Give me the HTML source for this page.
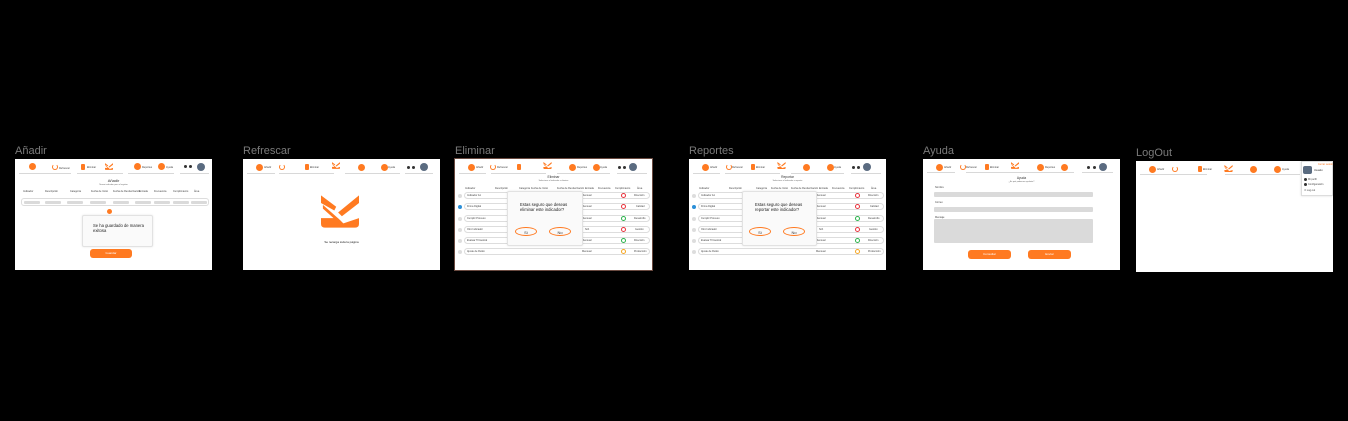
<!DOCTYPE html>
<html><head><meta charset="utf-8">
<style>
*{margin:0;padding:0;box-sizing:border-box}
body{width:1348px;height:421px;background:#000;position:relative;overflow:hidden;font-family:"Liberation Sans",sans-serif}
.lbl{position:absolute;color:#7b7b7b;font-size:11px}
.f{position:absolute;width:197px;height:111px;background:#fff;overflow:hidden}
.f *{position:absolute}
.c{width:7px;height:7px;border-radius:50%;background:#ff7a21}
.d{width:3px;height:3px;border-radius:50%;background:#333}
.av{width:8px;height:8px;border-radius:50%;background:#5a6b80}
.ul{height:1px;background:#d8d8d8}
.t{font-size:2.5px;color:#444;white-space:nowrap}
.doc{width:4px;height:6px;background:#ff7a21;border-radius:1px}
.rf{width:6px;height:6px;border:1.2px solid #ff7a21;border-radius:50%;border-top-color:transparent}
.bar{background:#dadada;height:3px;border-radius:1px}
.btn{background:#ff7a21;border-radius:3px;color:#fff;font-size:3px;text-align:center}
.row{left:9px;width:186px;height:7px;border:0.5px solid #ddd;border-radius:4px}
.rd{width:4px;height:4px;border-radius:50%;background:#ddd;left:3px}
.st{width:5px;height:5px;border-radius:50%;border:1px solid #e8323c;left:166px}
.md{background:#fafafa;border:0.5px solid #e2e2e2;border-radius:2px;box-shadow:0 0 2px rgba(0,0,0,.1)}
.el{border:0.6px solid #ff7a21;border-radius:50%;font-size:4px;text-align:center;color:#333}
</style></head><body>

<svg width="0" height="0" style="position:absolute"><defs>
<symbol id="lg" viewBox="0 0 40 34"><path d="M0 0 L16 12 L14 16 L0 8Z M40 0 L40 8 L22 22 L18 18Z M0 24 L18 24 L22 30 L40 24 L40 30 Q40 34 36 34 L4 34 Q0 34 0 30Z M2 10 L20 26 L24 30 L20 30 L2 14Z" fill="#ff7a21"/></symbol>
</defs></svg>

<div class="lbl" style="left:15px;top:145px">Añadir</div>
<div class="lbl" style="left:243px;top:145px">Refrescar</div>
<div class="lbl" style="left:455px;top:145px">Eliminar</div>
<div class="lbl" style="left:689px;top:145px">Reportes</div>
<div class="lbl" style="left:923px;top:145px">Ayuda</div>
<div class="lbl" style="left:1136px;top:147px">LogOut</div>

<!-- Añadir -->
<div class="f" style="left:15px;top:159px">
<div class="c" style="left:14px;top:4px"></div>
<div class="rf" style="left:37px;top:5px"></div><div class="t" style="left:44px;top:8px">Refrescar</div>
<div class="doc" style="left:66px;top:5px"></div><div class="t" style="left:72px;top:7px">Eliminar</div>
<svg style="left:90px;top:4px" width="8" height="7"><use href="#lg"/></svg>
<div class="c" style="left:119px;top:4px"></div><div class="t" style="left:127px;top:7px">Reportes</div>
<div class="c" style="left:143px;top:4px"></div><div class="t" style="left:151px;top:7px">Ayuda</div>
<div class="d" style="left:169px;top:6px"></div><div class="d" style="left:174px;top:6px"></div>
<div class="av" style="left:182px;top:4px"></div>
<div class="ul" style="left:4px;top:14px;width:52px"></div><div class="ul" style="left:62px;top:14px;width:46px"></div>
<div class="ul" style="left:113px;top:14px;width:46px"></div><div class="ul" style="left:165px;top:14px;width:29px"></div>
<div style="left:0;width:197px;top:19px;text-align:center;font-size:4px;color:#333">Añadir</div>
<div style="left:0;width:197px;top:25px;text-align:center;font-size:2px;color:#666">Nuevo indicador para el registro</div>
<div class="t" style="left:8px;top:31px">Indicador</div><div class="t" style="left:30px;top:31px">Descripción</div><div class="t" style="left:55px;top:31px">Categoría</div><div class="t" style="left:76px;top:31px">Fecha de Inicio</div><div class="t" style="left:98px;top:31px">Fecha de Renderización</div><div class="t" style="left:124px;top:31px">Entrada</div><div class="t" style="left:139px;top:31px">Frecuencia</div><div class="t" style="left:158px;top:31px">Cumplimiento</div><div class="t" style="left:179px;top:31px">Área</div>
<div style="left:6px;top:39px;width:188px;height:8px;border:0.5px solid #ddd;border-radius:3px"></div>
<div class="bar" style="left:9px;top:42px;width:16px"></div><div class="bar" style="left:30px;top:42px;width:16px"></div><div class="bar" style="left:52px;top:42px;width:16px"></div><div class="bar" style="left:75px;top:42px;width:16px"></div><div class="bar" style="left:98px;top:42px;width:16px"></div><div class="bar" style="left:120px;top:42px;width:16px"></div><div class="bar" style="left:139px;top:42px;width:16px"></div><div class="bar" style="left:158px;top:42px;width:16px"></div><div class="bar" style="left:176px;top:42px;width:16px"></div>
<div class="c" style="left:92px;top:50px;width:5px;height:5px"></div>
<div class="md" style="left:67px;top:56px;width:71px;height:32px"></div>
<div style="left:78px;top:64px;font-size:4.2px;color:#222;line-height:5px;width:55px">Se ha guardado de manera exitosa</div>
<div class="btn" style="left:75px;top:90px;width:42px;height:9px;line-height:9px">Guardar</div>
</div>

<!-- Refrescar -->
<div class="f" style="left:243px;top:159px">
<div class="c" style="left:13px;top:5px"></div><div class="t" style="left:21px;top:7px">Añadir</div>
<div class="rf" style="left:36px;top:5px"></div>
<div class="doc" style="left:62px;top:5px"></div><div class="t" style="left:67px;top:7px">Eliminar</div>
<svg style="left:89px;top:3px" width="8" height="7"><use href="#lg"/></svg>
<div class="c" style="left:115px;top:5px"></div>
<div class="c" style="left:138px;top:5px"></div><div class="t" style="left:145px;top:7px">Ayuda</div>
<div class="d" style="left:164px;top:7px"></div><div class="d" style="left:169px;top:7px"></div>
<div class="av" style="left:177px;top:4px"></div>
<div class="ul" style="left:4px;top:14px;width:28px"></div><div class="ul" style="left:36px;top:14px;width:55px"></div>
<div class="ul" style="left:102px;top:14px;width:55px"></div><div class="ul" style="left:162px;top:14px;width:28px"></div>
<svg style="left:78px;top:36px" width="38" height="33"><use href="#lg"/></svg>
<div style="left:0;width:197px;top:81px;text-align:center;font-size:3px;color:#222">Se recarga toda la página</div>
</div>

<!-- Eliminar & Reportes -->
<div class="f" style="left:455px;top:159px;outline:1px solid #6a4a40">
<div class="c" style="left:13px;top:5px"></div><div class="t" style="left:21px;top:7px">Añadir</div>
<div class="rf" style="left:35px;top:5px"></div><div class="t" style="left:42px;top:7px">Refrescar</div>
<div class="doc" style="left:62px;top:5px"></div>
<svg style="left:88px;top:3px" width="9" height="7"><use href="#lg"/></svg>
<div class="c" style="left:114px;top:5px"></div><div class="t" style="left:122px;top:7px">Reportes</div>
<div class="c" style="left:138px;top:5px"></div><div class="t" style="left:145px;top:7px">Ayuda</div>
<div class="d" style="left:163px;top:7px"></div><div class="d" style="left:168px;top:7px"></div>
<div class="av" style="left:174px;top:4px"></div>
<div class="ul" style="left:4px;top:14px;width:27px"></div><div class="ul" style="left:36px;top:14px;width:55px"></div><div class="ul" style="left:102px;top:14px;width:53px"></div><div class="ul" style="left:162px;top:14px;width:30px"></div>
<div style="left:0;width:197px;top:16px;text-align:center;font-size:3.3px;color:#333">Eliminar</div>
<div style="left:0;width:197px;top:21px;text-align:center;font-size:2px;color:#666">Seleccione el indicador a eliminar</div>
<div class="t" style="left:10px;top:28px">Indicador</div><div class="t" style="left:40px;top:28px">Descripción</div><div class="t" style="left:64px;top:28px">Categoría</div><div class="t" style="left:76px;top:28px">Fecha de Inicio</div><div class="t" style="left:102px;top:28px">Fecha de Renderización</div><div class="t" style="left:130px;top:28px">Entrada</div><div class="t" style="left:143px;top:28px">Frecuencia</div><div class="t" style="left:160px;top:28px">Cumplimiento</div><div class="t" style="left:182px;top:28px">Área</div>
<div class="row" style="top:33px"></div><div class="row" style="top:44px"></div><div class="row" style="top:56px"></div><div class="row" style="top:67px"></div><div class="row" style="top:78px"></div><div class="row" style="top:89px"></div>
<div class="rd" style="top:35px"></div><div class="rd" style="top:46px;background:#2b8fd8"></div><div class="rd" style="top:58px"></div><div class="rd" style="top:69px"></div><div class="rd" style="top:80px"></div><div class="rd" style="top:91px"></div>
<div class="t" style="left:12px;top:35px">Indicador A1</div><div class="t" style="left:12px;top:46px">Firma Digital</div><div class="t" style="left:12px;top:58px">Cumplir Proceso</div><div class="t" style="left:12px;top:69px">Otro Indicador</div><div class="t" style="left:12px;top:80px">Evaluar Trimestral</div><div class="t" style="left:12px;top:91px">Ajuste de Ruido</div>
<div class="t" style="left:127px;top:35px">Mensual</div><div class="t" style="left:127px;top:46px">Mensual</div><div class="t" style="left:127px;top:58px">Mensual</div><div class="t" style="left:130px;top:69px">N/A</div><div class="t" style="left:127px;top:80px">Mensual</div><div class="t" style="left:127px;top:91px">Mensual</div>
<div class="st" style="top:34px"></div><div class="st" style="top:45px"></div><div class="st" style="top:57px;border-color:#2bb24c"></div><div class="st" style="top:68px"></div><div class="st" style="top:79px;border-color:#2bb24c"></div><div class="st" style="top:90px;border-color:#f5a623"></div>
<div class="t" style="left:179px;top:35px">Dirección</div><div class="t" style="left:181px;top:46px">Calidad</div><div class="t" style="left:179px;top:58px">Desarrollo</div><div class="t" style="left:180px;top:69px">Gestión</div><div class="t" style="left:179px;top:80px">Dirección</div><div class="t" style="left:179px;top:91px">Producción</div>
<div class="md" style="left:52px;top:32px;width:76px;height:55px"></div>
<div style="left:65px;top:43px;font-size:4.2px;color:#222;line-height:5px;width:55px">Estas seguro que deseas eliminar este indicador?</div>
<div class="el" style="left:60px;top:68px;width:22px;height:9px;line-height:9px">Sí</div>
<div class="el" style="left:94px;top:68px;width:22px;height:9px;line-height:9px">No</div>
</div>

<div class="f" style="left:689px;top:159px">
<div class="c" style="left:13px;top:5px"></div><div class="t" style="left:21px;top:7px">Añadir</div>
<div class="rf" style="left:37px;top:5px"></div><div class="t" style="left:43px;top:7px">Refrescar</div>
<div class="doc" style="left:62px;top:5px"></div><div class="t" style="left:67px;top:7px">Eliminar</div>
<svg style="left:88px;top:3px" width="9" height="7"><use href="#lg"/></svg>
<div class="c" style="left:114px;top:5px"></div>
<div class="c" style="left:138px;top:5px"></div><div class="t" style="left:145px;top:7px">Ayuda</div>
<div class="d" style="left:163px;top:7px"></div><div class="d" style="left:168px;top:7px"></div>
<div class="av" style="left:174px;top:4px"></div>
<div class="ul" style="left:4px;top:14px;width:27px"></div><div class="ul" style="left:36px;top:14px;width:55px"></div><div class="ul" style="left:102px;top:14px;width:53px"></div><div class="ul" style="left:162px;top:14px;width:30px"></div>
<div style="left:0;width:197px;top:16px;text-align:center;font-size:3.3px;color:#333">Reportar</div>
<div style="left:0;width:197px;top:21px;text-align:center;font-size:2px;color:#666">Seleccione el indicador a reportar</div>
<div class="t" style="left:10px;top:28px">Indicador</div><div class="t" style="left:40px;top:28px">Descripción</div><div class="t" style="left:67px;top:28px">Categoría</div><div class="t" style="left:82px;top:28px">Fecha de Inicio</div><div class="t" style="left:102px;top:28px">Fecha de Renderización</div><div class="t" style="left:130px;top:28px">Entrada</div><div class="t" style="left:143px;top:28px">Frecuencia</div><div class="t" style="left:160px;top:28px">Cumplimiento</div><div class="t" style="left:182px;top:28px">Área</div>
<div class="row" style="top:33px"></div><div class="row" style="top:44px"></div><div class="row" style="top:56px"></div><div class="row" style="top:67px"></div><div class="row" style="top:78px"></div><div class="row" style="top:89px"></div>
<div class="rd" style="top:35px"></div><div class="rd" style="top:46px;background:#2b8fd8"></div><div class="rd" style="top:58px"></div><div class="rd" style="top:69px"></div><div class="rd" style="top:80px"></div><div class="rd" style="top:91px"></div>
<div class="t" style="left:12px;top:35px">Indicador A1</div><div class="t" style="left:12px;top:46px">Firma Digital</div><div class="t" style="left:12px;top:58px">Cumplir Proceso</div><div class="t" style="left:12px;top:69px">Otro Indicador</div><div class="t" style="left:12px;top:80px">Evaluar Trimestral</div><div class="t" style="left:12px;top:91px">Ajuste de Ruido</div>
<div class="t" style="left:127px;top:35px">Mensual</div><div class="t" style="left:127px;top:46px">Mensual</div><div class="t" style="left:127px;top:58px">Mensual</div><div class="t" style="left:130px;top:69px">N/A</div><div class="t" style="left:127px;top:80px">Mensual</div><div class="t" style="left:127px;top:91px">Mensual</div>
<div class="st" style="top:34px"></div><div class="st" style="top:45px"></div><div class="st" style="top:57px;border-color:#2bb24c"></div><div class="st" style="top:68px"></div><div class="st" style="top:79px;border-color:#2bb24c"></div><div class="st" style="top:90px;border-color:#f5a623"></div>
<div class="t" style="left:179px;top:35px">Dirección</div><div class="t" style="left:181px;top:46px">Calidad</div><div class="t" style="left:179px;top:58px">Desarrollo</div><div class="t" style="left:180px;top:69px">Gestión</div><div class="t" style="left:179px;top:80px">Dirección</div><div class="t" style="left:179px;top:91px">Producción</div>
<div class="md" style="left:53px;top:32px;width:75px;height:55px"></div>
<div style="left:66px;top:43px;font-size:4.2px;color:#222;line-height:5px;width:55px">Estas seguro que deseas reportar este indicador?</div>
<div class="el" style="left:60px;top:68px;width:22px;height:9px;line-height:9px">Sí</div>
<div class="el" style="left:94px;top:68px;width:22px;height:9px;line-height:9px">No</div>
</div>

<!-- Ayuda -->
<div class="f" style="left:923px;top:159px">
<div class="c" style="left:13px;top:5px"></div><div class="t" style="left:21px;top:7px">Añadir</div>
<div class="rf" style="left:37px;top:5px"></div><div class="t" style="left:43px;top:7px">Refrescar</div>
<div class="doc" style="left:62px;top:5px"></div><div class="t" style="left:67px;top:7px">Eliminar</div>
<svg style="left:88px;top:3px" width="8" height="7"><use href="#lg"/></svg>
<div class="c" style="left:114px;top:5px"></div><div class="t" style="left:122px;top:7px">Reportes</div>
<div class="c" style="left:138px;top:5px"></div>
<div class="d" style="left:164px;top:7px"></div><div class="d" style="left:170px;top:7px"></div>
<div class="av" style="left:176px;top:4px"></div>
<div class="ul" style="left:4px;top:13px;width:28px"></div><div class="ul" style="left:43px;top:13px;width:60px"></div><div class="ul" style="left:103px;top:13px;width:48px"></div><div class="ul" style="left:159px;top:13px;width:31px"></div>
<div style="left:0;width:197px;top:17px;text-align:center;font-size:3.3px;color:#333">Ayuda</div>
<div style="left:0;width:197px;top:22px;text-align:center;font-size:2px;color:#666">¿En qué podemos ayudarte?</div>
<div class="t" style="left:12px;top:27px">Nombre</div>
<div class="bar" style="left:11px;top:33px;width:159px;height:5px"></div>
<div class="t" style="left:12px;top:42px">Correo</div>
<div class="bar" style="left:11px;top:48px;width:159px;height:5px"></div>
<div class="t" style="left:12px;top:57px">Mensaje</div>
<div class="bar" style="left:11px;top:60px;width:159px;height:24px"></div>
<div class="btn" style="left:45px;top:91px;width:43px;height:9px;line-height:9px">Consultar</div>
<div class="btn" style="left:105px;top:91px;width:43px;height:9px;line-height:9px">Enviar</div>
</div>

<!-- LogOut -->
<div class="f" style="left:1136px;top:161px">
<div class="c" style="left:13px;top:5px"></div><div class="t" style="left:21px;top:7px">Añadir</div>
<div class="rf" style="left:36px;top:5px"></div>
<div class="doc" style="left:62px;top:5px"></div><div class="t" style="left:67px;top:7px">Eliminar</div>
<svg style="left:88px;top:4px" width="9" height="7"><use href="#lg"/></svg>
<div class="c" style="left:114px;top:5px"></div>
<div class="c" style="left:138px;top:5px"></div><div class="t" style="left:146px;top:7px">Ayuda</div>
<div class="ul" style="left:4px;top:13px;width:67px"></div><div class="ul" style="left:89px;top:13px;width:75px"></div>
<div style="left:165px;top:0;width:32px;height:35px;background:#fff;border:0.5px solid #ddd;box-shadow:0 0 2px rgba(0,0,0,.15)"></div>
<div class="t" style="left:182px;top:2px;color:#ff7a21">Cerrar sesión</div>
<div class="av" style="left:167px;top:5px;border-radius:2px;width:9px"></div><div class="t" style="left:178px;top:8px;color:#222">Usuario</div>
<div class="d" style="left:168px;top:17px"></div><div class="t" style="left:172px;top:17px">Mi perfil</div>
<div class="d" style="left:168px;top:22px"></div><div class="t" style="left:172px;top:22px">Configuración</div>
<div class="t" style="left:168px;top:28px">⟲ Log out</div>
</div>

</body></html>
